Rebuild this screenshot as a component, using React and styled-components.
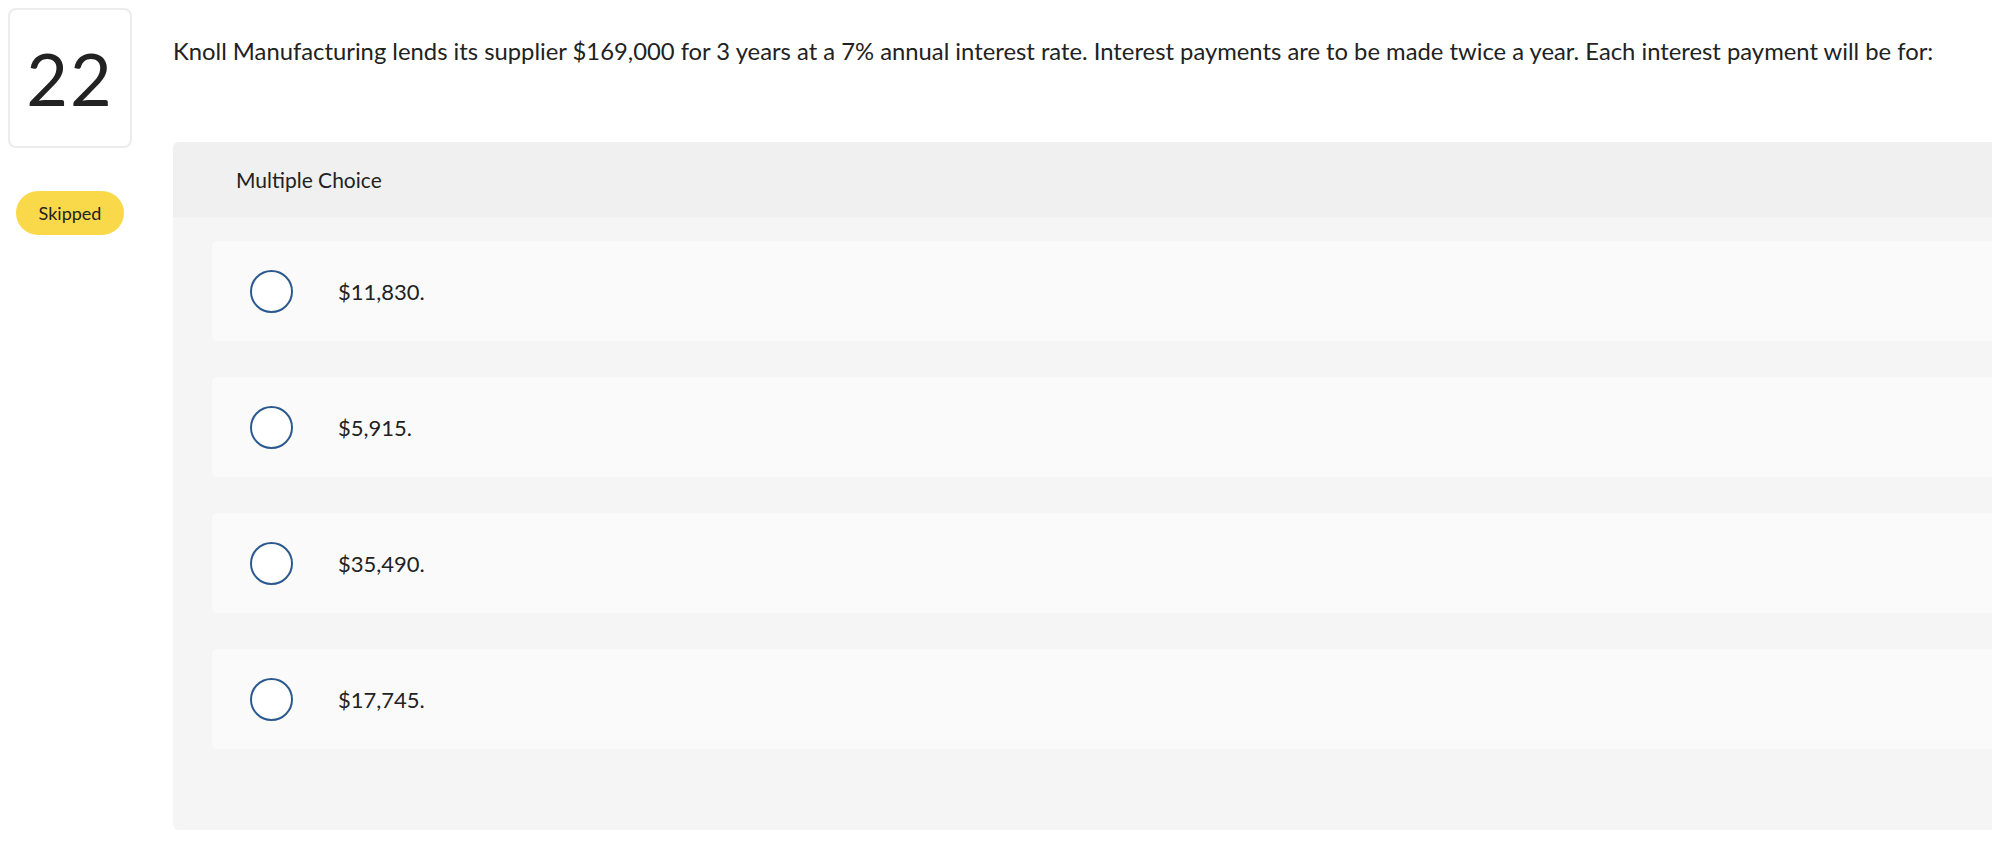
import React from "react";
import styled, { createGlobalStyle } from "styled-components";

const GlobalStyle = createGlobalStyle`
  html, body {
    margin: 0;
    padding: 0;
    background: #ffffff;
  }
  body {
    font-family: Lato, "Noto Sans", "Liberation Sans", sans-serif;
    color: #222222;
    overflow: hidden;
  }
`;

const Page = styled.div`
  display: grid;
  grid-template-columns: 173px 1fr;
  width: 1992px;
  padding-top: 8px;
  box-sizing: border-box;
`;

const Side = styled.div`
  display: flex;
  flex-direction: column;
  padding-left: 8px;
`;

const NumberBox = styled.div`
  width: 124px;
  height: 140px;
  box-sizing: border-box;
  border: 2px solid #ececec;
  border-radius: 8px;
  display: flex;
  align-items: center;
  justify-content: center;
  font-size: 72px;
  color: #222;
  letter-spacing: 2px;
`;

const Status = styled.div`
  margin: 43px 0 0 8px;
  width: 108px;
  height: 44px;
  border-radius: 22px;
  background: #f9d949;
  display: flex;
  align-items: center;
  justify-content: center;
  font-size: 18px;
  color: #222;
`;

const Main = styled.div`
  display: flex;
  flex-direction: column;
`;

const Question = styled.p`
  margin: 0;
  padding-top: 27px;
  height: 134px;
  box-sizing: border-box;
  font-size: 23.8px;
  line-height: 32px;
  color: #222;
`;

const Panel = styled.div`
  background: #f5f5f5;
  border-radius: 6px 0 0 6px;
  display: flex;
  flex-direction: column;
`;

const PanelHeader = styled.div`
  height: 75px;
  background: #f0f0f0;
  border-radius: 6px 0 0 0;
  display: flex;
  align-items: center;
  padding-left: 63px;
  font-size: 21px;
  color: #222;
`;

const Choices = styled.div`
  display: flex;
  flex-direction: column;
  gap: 36px;
  padding: 24px 0 81px 39px;
`;

const Choice = styled.label`
  height: 100px;
  background: #fafafa;
  border-radius: 5px 0 0 5px;
  display: flex;
  align-items: center;
  padding-left: 38px;
  gap: 45px;
  font-size: 22px;
  color: #222;
  cursor: pointer;
`;

const Radio = styled.span`
  width: 43px;
  height: 43px;
  box-sizing: border-box;
  border: 2px solid #2b5a8e;
  border-radius: 50%;
  background: #ffffff;
  flex-shrink: 0;
`;

const choices = ["$11,830.", "$5,915.", "$35,490.", "$17,745."];

export default function App() {
  return (
    <>
      <GlobalStyle />
      <Page>
        <Side>
          <NumberBox>22</NumberBox>
          <Status>Skipped</Status>
        </Side>
        <Main>
          <Question>
            Knoll Manufacturing lends its supplier $169,000 for 3 years at a 7% annual interest rate.
            Interest payments are to be made twice a year. Each interest payment will be for:
          </Question>
          <Panel>
            <PanelHeader>Multiple Choice</PanelHeader>
            <Choices>
              {choices.map((c) => (
                <Choice key={c}>
                  <Radio />
                  {c}
                </Choice>
              ))}
            </Choices>
          </Panel>
        </Main>
      </Page>
    </>
  );
}
